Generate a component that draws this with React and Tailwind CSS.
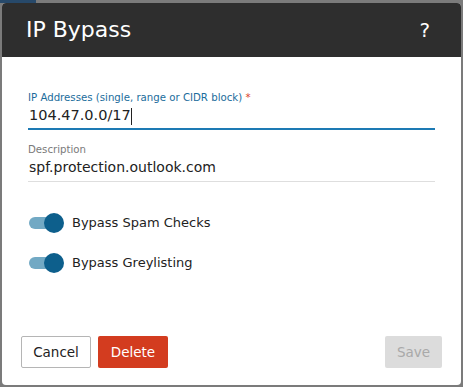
const font = { fontFamily: '"DejaVu Sans", sans-serif' };

const Toggle = ({ label }) => (
  <div className="flex items-center h-5">
    <div className="relative w-[36px] h-5 mr-[7px]">
      <div className="absolute left-0 top-[4px] w-[26px] h-[12px] rounded-full bg-[#72a9c4]" />
      <div className="absolute left-[15px] top-0 w-5 h-5 rounded-full bg-[#0d5f8c]" />
    </div>
    <span className="text-[13px] text-[#222]">{label}</span>
  </div>
);

export default function App() {
  return (
    <div
      className="w-[463px] h-[387px] bg-[#7b7b7b] pt-[3px] pl-[2px] pr-[2px] pb-[2px] relative overflow-hidden"
      style={font}
    >
      <div className="absolute left-0 top-0 w-[36px] h-[3px] bg-[#27496a]" />
      <div className="h-full flex flex-col bg-white rounded-[4px] overflow-hidden">
        <div className="h-[54px] shrink-0 bg-[#2e2e2e] flex items-center justify-between pl-[24px] pr-[31px]">
          <span className="text-[22px] text-white leading-none">IP Bypass</span>
          <span className="text-[20px] text-white leading-none">?</span>
        </div>
        <div className="flex-1 flex flex-col px-[26px] pt-[35px]">
          <div className="text-[10.2px] leading-[12px] text-[#1b6d9c]">
            IP Addresses (single, range or CIDR block) <span className="text-[#d9402a]">*</span>
          </div>
          <div className="flex items-center h-[26px] text-[14.5px] text-[#222] pl-[1px] border-b-2 border-[#1d7ab4]">
            104.47.0.0/17<span className="inline-block w-px h-[17px] bg-[#222]" />
          </div>
          <div className="mt-[14px] text-[10.2px] leading-[12px] text-[#7a7a7a]">Description</div>
          <div className="flex items-center h-[26px] pb-[3px] text-[14px] text-[#222] pl-[1px] border-b border-[#dedede]">
            spf.protection.outlook.com
          </div>
          <div className="flex flex-col gap-5 mt-[31px] pl-[1px]">
            <Toggle label="Bypass Spam Checks" />
            <Toggle label="Bypass Greylisting" />
          </div>
        </div>
        <div className="flex items-center justify-between px-[19px] pb-[17px]">
          <div className="flex gap-[7px]">
            <button className="h-[32px] w-[70px] border border-[#b5b5b5] rounded-[2px] text-[13.5px] text-[#222] bg-white">
              Cancel
            </button>
            <button className="h-[32px] w-[70px] rounded-[2px] text-[13.5px] text-white bg-[#d33c1f]">
              Delete
            </button>
          </div>
          <button className="h-[32px] w-[57px] rounded-[2px] text-[13.5px] text-[#a9a9a9] bg-[#dcdcdc]">
            Save
          </button>
        </div>
      </div>
    </div>
  );
}
